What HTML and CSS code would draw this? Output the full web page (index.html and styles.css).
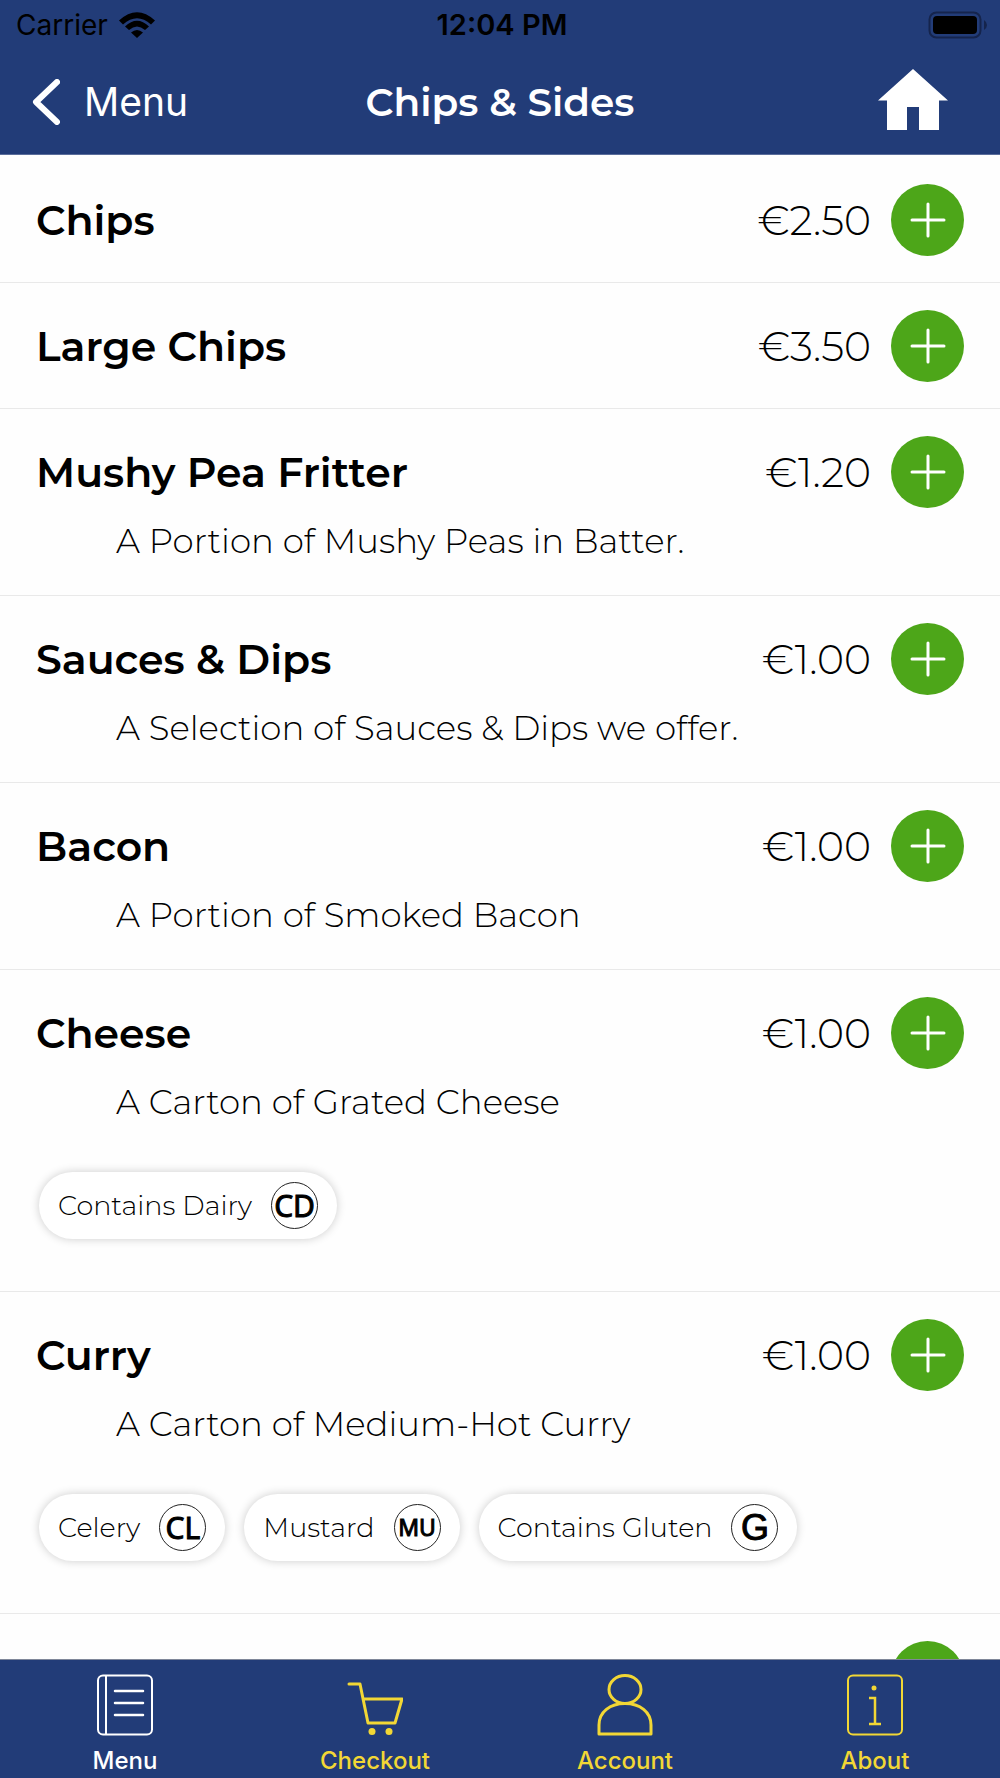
FILE: index.html
```html
<!DOCTYPE html>
<html lang="en">
<head>
<meta charset="utf-8">
<meta name="viewport" content="width=device-width, initial-scale=1">
<title>Chips &amp; Sides</title>
<link rel="stylesheet" href="styles.css">
</head>
<body>
<svg class="defs" aria-hidden="true">
  <symbol id="plus" viewBox="0 0 36 36"><path d="M18 2v32M2 18h32" fill="none" stroke="currentColor" stroke-width="3" stroke-linecap="round"/></symbol>
</svg>

<header class="header">
  <div class="status">
    <div class="status-side">
      <span>Carrier</span>
      <svg width="38" height="28" viewBox="0 0 38 28" aria-hidden="true">
        <path d="M1 9.500Q19-7 37 9.500L33 13.500Q19 1 5 13.500Z"/>
        <path d="M7 15.500Q19 4 31 15.500L27 19Q19 12 11 19Z"/>
        <path d="M13 21.500Q19 16.500 25 21.500L19 27Z"/>
      </svg>
    </div>
    <span class="status-time">12:04 PM</span>
    <div class="status-side status-right">
      <svg width="60" height="28" viewBox="0 0 60 28" aria-hidden="true">
        <rect x="1.500" y="1.500" width="51" height="25" rx="7" fill="none" stroke="#15244c" stroke-width="2"/>
        <rect x="5" y="5" width="44" height="18" rx="4"/>
        <path d="M56 9q3 2 3 5t-3 5z" fill="#15244c"/>
      </svg>
    </div>
  </div>
  <div class="nav">
    <a class="back" href="#menu">
      <svg width="28" height="46" viewBox="0 0 28 46" aria-hidden="true"><path d="M25 3 4 23l21 20" fill="none" stroke="currentColor" stroke-width="6" stroke-linecap="round" stroke-linejoin="round"/></svg>
      <span>Menu</span>
    </a>
    <h1 class="title">Chips &amp; Sides</h1>
    <a class="home" href="#home" aria-label="Home">
      <svg width="70" height="61" viewBox="0 0 70 61" aria-hidden="true"><path fill="currentColor" d="M35 0 70 31.500H61V61H41V38H29V61H9V31.500H0Z"/></svg>
    </a>
  </div>
</header>

<main class="list">
  <section class="item">
    <div class="item-head"><h2 class="name">Chips</h2><span class="price">€2.50</span><button class="add" aria-label="Add Chips"><svg width="36" height="36"><use href="#plus"/></svg></button></div>
  </section>
  <section class="item">
    <div class="item-head"><h2 class="name">Large Chips</h2><span class="price">€3.50</span><button class="add" aria-label="Add Large Chips"><svg width="36" height="36"><use href="#plus"/></svg></button></div>
  </section>
  <section class="item">
    <div class="item-head"><h2 class="name">Mushy Pea Fritter</h2><span class="price">€1.20</span><button class="add" aria-label="Add Mushy Pea Fritter"><svg width="36" height="36"><use href="#plus"/></svg></button></div>
    <p class="desc">A Portion of Mushy Peas in Batter.</p>
  </section>
  <section class="item">
    <div class="item-head"><h2 class="name">Sauces &amp; Dips</h2><span class="price">€1.00</span><button class="add" aria-label="Add Sauces &amp; Dips"><svg width="36" height="36"><use href="#plus"/></svg></button></div>
    <p class="desc">A Selection of Sauces &amp; Dips we offer.</p>
  </section>
  <section class="item">
    <div class="item-head"><h2 class="name">Bacon</h2><span class="price">€1.00</span><button class="add" aria-label="Add Bacon"><svg width="36" height="36"><use href="#plus"/></svg></button></div>
    <p class="desc">A Portion of Smoked Bacon</p>
  </section>
  <section class="item">
    <div class="item-head"><h2 class="name">Cheese</h2><span class="price">€1.00</span><button class="add" aria-label="Add Cheese"><svg width="36" height="36"><use href="#plus"/></svg></button></div>
    <p class="desc">A Carton of Grated Cheese</p>
    <ul class="tags">
      <li class="tag">Contains Dairy <span class="badge">CD</span></li>
    </ul>
  </section>
  <section class="item">
    <div class="item-head"><h2 class="name">Curry</h2><span class="price">€1.00</span><button class="add" aria-label="Add Curry"><svg width="36" height="36"><use href="#plus"/></svg></button></div>
    <p class="desc">A Carton of Medium-Hot Curry</p>
    <ul class="tags">
      <li class="tag">Celery <span class="badge">CL</span></li>
      <li class="tag">Mustard <span class="badge badge-small">MU</span></li>
      <li class="tag">Contains Gluten <span class="badge badge-large">G</span></li>
    </ul>
  </section>
  <section class="item">
    <div class="item-head"><button class="add" aria-label="Add item"><svg width="36" height="36"><use href="#plus"/></svg></button></div>
  </section>
</main>

<nav class="tabs">
  <a class="tab tab-active" href="#menu">
    <svg width="56" height="62" viewBox="0 0 56 62" fill="none" stroke="currentColor" stroke-width="2" aria-hidden="true"><rect x="1" y="1.500" width="54" height="59" rx="5"/><path d="M9 2v58"/><path d="M18 17h28M18 29h28M18 41h28" stroke-width="2.500" stroke-linecap="round"/></svg>
    <span>Menu</span>
  </a>
  <a class="tab" href="#checkout">
    <svg width="56" height="62" viewBox="0 0 56 62" fill="none" stroke="currentColor" stroke-width="3" stroke-linejoin="round" aria-hidden="true"><path d="M2 10h11l8 39h27l7-24H16" stroke-linecap="round"/><g fill="currentColor" stroke="none"><circle cx="25" cy="57.500" r="3.500"/><circle cx="42" cy="57.500" r="3.500"/></g></svg>
    <span>Checkout</span>
  </a>
  <a class="tab" href="#account">
    <svg width="56" height="62" viewBox="0 0 56 62" fill="none" stroke="currentColor" stroke-width="3" stroke-linejoin="round" aria-hidden="true"><ellipse cx="28" cy="15.500" rx="16" ry="14"/><path d="M2 60V51C2 38 13 29.500 28 29.500S54 38 54 51v9Z"/></svg>
    <span>Account</span>
  </a>
  <a class="tab" href="#about">
    <svg width="56" height="62" viewBox="0 0 56 62" fill="none" stroke="currentColor" stroke-width="2" aria-hidden="true"><rect x="1" y="1.500" width="54" height="59" rx="5"/><path d="M22 24h6v26M22 50h12" stroke-width="2.500"/><circle cx="27" cy="14" r="2.500" fill="currentColor" stroke="none"/></svg>
    <span>About</span>
  </a>
</nav>
</body>
</html>
```
FILE: styles.css
```css
* { box-sizing: border-box; }

body {
  margin: 0;
  height: 100vh;
  display: flex;
  flex-direction: column;
  background: #fefefe;
  color: #000;
  font-family: Montserrat, Inter, sans-serif;
}

a { color: inherit; text-decoration: none; }
svg { display: block; flex: none; }
.defs { width: 0; height: 0; position: absolute; }

/* Header */
.header {
  flex: none;
  background: #223c78;
  border-bottom: 1px solid #5a6d9b;
}

.status {
  display: grid;
  grid-template-columns: 1fr auto 1fr;
  align-items: center;
  height: 50px;
  padding: 0 12px 0 16px;
  font: 400 28px/32px Inter, sans-serif;
}

.status-side { display: flex; align-items: center; gap: 10px; }
.status-right { justify-content: flex-end; }
.status-time { font-weight: 600; font-size: 29px; }

.nav {
  display: grid;
  grid-template-columns: 1fr auto 1fr;
  align-items: center;
  height: 104px;
  padding: 0 32px;
  color: #fff;
}

.back {
  display: flex;
  align-items: center;
  gap: 24px;
  font: 400 39px/48px Inter, sans-serif;
}

.title { margin: 0; font-size: 39px; line-height: 48px; font-weight: 600; }
.home { justify-self: end; padding: 0 20px 6px 0; }

/* Item list */
.list {
  flex: 1;
  min-height: 0;
  overflow-y: auto;
  scrollbar-width: none;
  padding-top: 2px;
}

.item { padding: 27px 36px 26px; border-bottom: 1px solid #e9e9e9; }

.item-head {
  display: flex;
  align-items: center;
  justify-content: flex-end;
  gap: 20px;
}

.name { flex: 1; margin: 0; font-size: 41px; line-height: 48px; font-weight: 600; }
.price { font-size: 41px; line-height: 48px; font-weight: 300; }

.add {
  display: grid;
  place-items: center;
  flex: none;
  width: 73px;
  height: 72px;
  padding: 0;
  border: 0;
  border-radius: 50%;
  background: #4da619;
  color: #fff;
}

.desc {
  margin: 0;
  padding: 11px 0 6px 80px;
  font-size: 34px;
  line-height: 44px;
  font-weight: 300;
}

/* Allergen tags */
.tags {
  display: flex;
  flex-wrap: wrap;
  gap: 19px;
  margin: 42px 0 0;
  padding: 0 3px 26px;
  list-style: none;
}

.tag {
  display: flex;
  align-items: center;
  gap: 19px;
  height: 67px;
  padding: 0 19px;
  border-radius: 34px;
  background: #fff;
  box-shadow: 0 0 10px rgba(0, 0, 0, 0.2);
  font-size: 27px;
  font-weight: 300;
}

.badge {
  display: grid;
  place-items: center;
  width: 47px;
  height: 47px;
  border: 1px solid #222;
  border-radius: 50%;
  font: 400 30px/43px "Noto Sans", sans-serif;
  -webkit-text-stroke: 1px #000;
}

.badge-small { font-size: 23px; }
.badge-large { font-family: "Liberation Sans", sans-serif; font-size: 36px; }

/* Tab bar */
.tabs {
  flex: none;
  display: grid;
  grid-template-columns: repeat(4, 1fr);
  border-top: 1px solid #7f8799;
  background: #223c78;
  color: #f2d735;
}

.tab {
  display: flex;
  flex-direction: column;
  align-items: center;
  gap: 9px;
  padding: 14px 0 1px;
  font: 500 24px/32px Inter, sans-serif;
}

.tab-active { color: #fff; }
```
